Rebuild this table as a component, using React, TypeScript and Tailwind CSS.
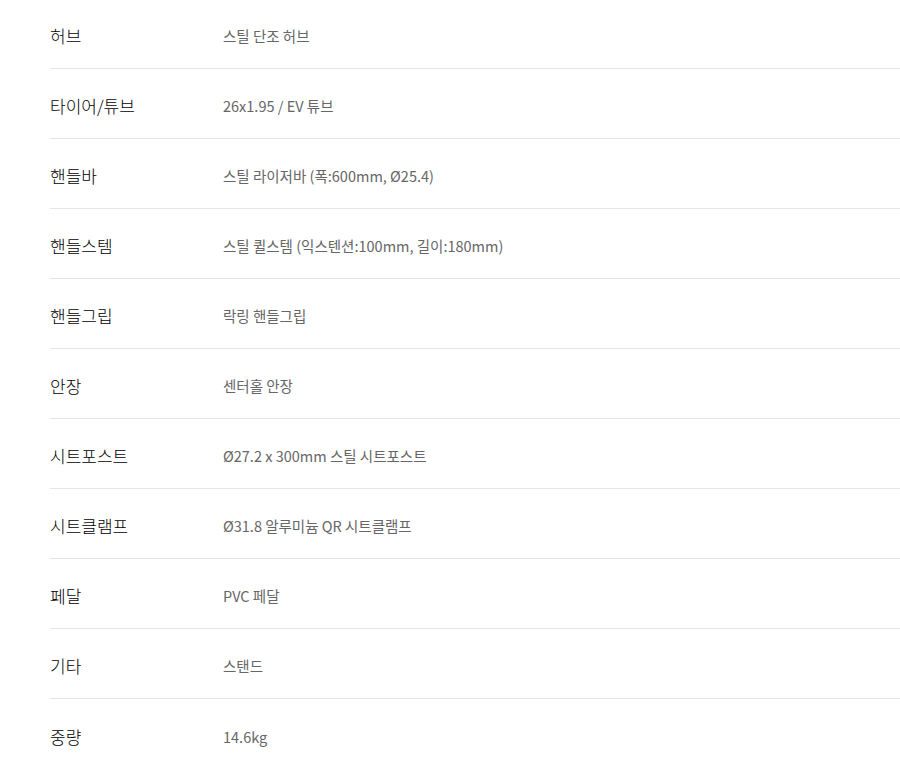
import React from 'react';

const SPECS: { label: string; value: string }[] = [
  { label: '허브', value: '스틸 단조 허브' },
  { label: '타이어/튜브', value: '26x1.95 / EV 튜브' },
  { label: '핸들바', value: '스틸 라이저바 (폭:600mm, Ø25.4)' },
  { label: '핸들스템', value: '스틸 퀼스템 (익스텐션:100mm, 길이:180mm)' },
  { label: '핸들그립', value: '락링 핸들그립' },
  { label: '안장', value: '센터홀 안장' },
  { label: '시트포스트', value: 'Ø27.2 x 300mm 스틸 시트포스트' },
  { label: '시트클램프', value: 'Ø31.8 알루미늄 QR 시트클램프' },
  { label: '페달', value: 'PVC 페달' },
  { label: '기타', value: '스탠드' },
  { label: '중량', value: '14.6kg' },
];

const App: React.FC = () => {
  return (
    <div
      className="w-[900px] bg-white pl-[50px]"
      style={{ fontFamily: '"Noto Sans CJK KR", "Noto Sans", sans-serif' }}
    >
      {SPECS.map((spec, i) => (
        <div
          key={spec.label}
          className={
            i === 0
              ? 'flex items-center h-[69px] pt-[4px] border-b border-[#e5e5e5]'
              : i === SPECS.length - 1
              ? 'flex items-center h-[70px] pt-[5px]'
              : 'flex items-center h-[70px] pt-[5px] border-b border-[#e5e5e5]'
          }
        >
          <div className="w-[173px] shrink-0 text-[17px] font-light text-black">{spec.label}</div>
          <div className="text-[14.5px] text-[#666]">{spec.value}</div>
        </div>
      ))}
    </div>
  );
};

export default App;
